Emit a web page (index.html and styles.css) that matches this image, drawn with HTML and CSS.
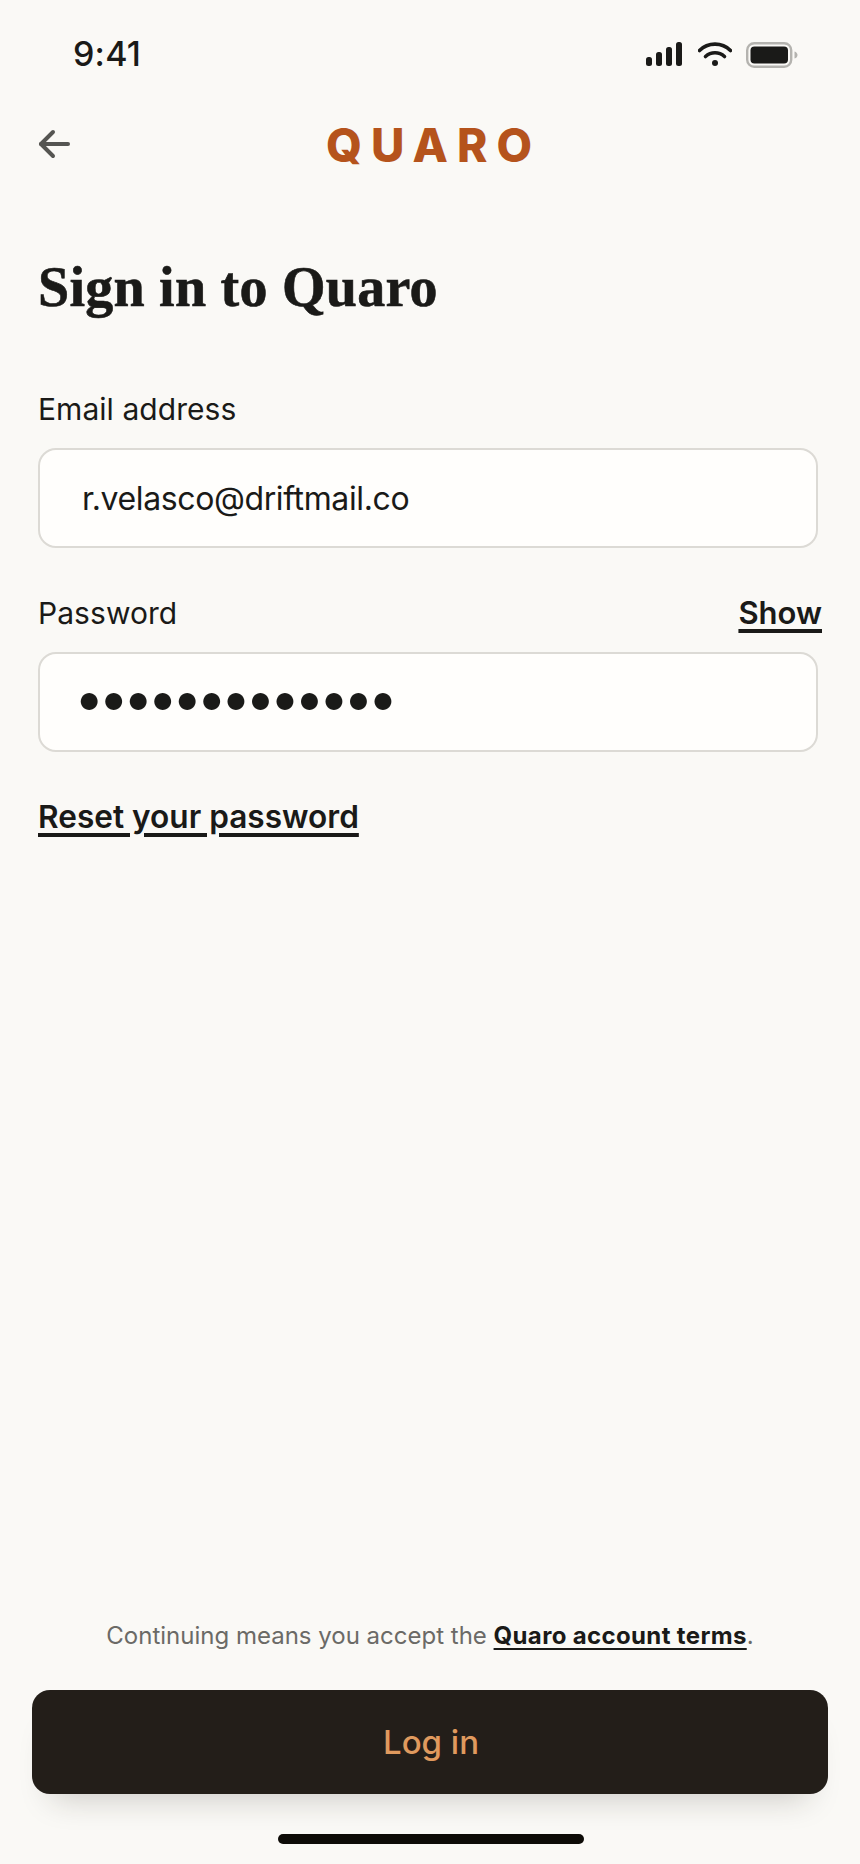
FILE: index.html
```html
<!DOCTYPE html>
<html lang="en">
<head>
<meta charset="utf-8">
<title>Sign in to Quaro</title>
<link rel="stylesheet" href="styles.css">
</head>
<body>
<div class="screen">
  <header class="status">
    <span class="time">9:41</span>
    <div class="status-icons">
      <svg class="sig" width="36" height="24" viewBox="0 0 36 24"><g fill="#1a1a18"><rect x="0" y="15" width="6" height="9" rx="2.5"/><rect x="10" y="10" width="6" height="14" rx="2.5"/><rect x="20" y="5" width="6" height="19" rx="2.5"/><rect x="30" y="0" width="6" height="24" rx="2.5"/></g></svg>
      <svg class="wifi" width="34" height="24" viewBox="0 0 34 24"><g fill="none" stroke="#1a1a18" stroke-width="3.6" stroke-linecap="round"><path d="M1.5 8.5C10 0 24 0 32.500 8.5"/><path d="M7.5 14.5C13 9.5 21 9.5 26.5 14.5"/></g><circle cx="17" cy="21" r="3" fill="#1a1a18"/></svg>
      <svg class="batt" width="52" height="26" viewBox="0 0 52 26"><rect x="1.2" y="1.2" width="44" height="23.6" rx="7" fill="none" stroke="#b4b3af" stroke-width="2.4"/><rect x="4.5" y="4.5" width="37.5" height="17" rx="4" fill="#1a1a18"/><path d="M48.500 9.500C50.500 10 51.500 11.500 51.500 13C51.500 14.500 50.500 16 48.500 16.500Z" fill="#b4b3af"/></svg>
    </div>
  </header>

  <nav class="nav">
    <svg class="back" width="34" height="30" viewBox="0 0 34 30"><g fill="none" stroke="#555552" stroke-width="4" stroke-linecap="round" stroke-linejoin="round"><path d="M31 15H4"/><path d="M16 3L4 15L16 27"/></g></svg>
    <span class="logo">QUARO</span>
  </nav>

  <main class="form">
    <h1 class="title">Sign in to Quaro</h1>

    <div class="field">
      <div class="label-row"><label class="label">Email address</label></div>
      <div class="input">r.velasco@driftmail.co</div>
    </div>

    <div class="field">
      <div class="label-row"><label class="label">Password</label><a class="link show">Show</a></div>
      <div class="input dots">•••••••••••••</div>
    </div>

    <a class="link reset">Reset your password</a>
  </main>

  <footer class="foot">
    <p class="terms">Continuing means you accept the <a class="terms-link">Quaro account terms</a>.</p>
    <button class="cta">Log in</button>
    <div class="home"></div>
  </footer>
</div>
</body>
</html>
```
FILE: styles.css
```css
* { box-sizing: border-box; }
html, body { margin: 0; padding: 0; }
body {
  background: #faf9f6;
  color: #1a1a18;
  font-family: Inter, "Liberation Sans", sans-serif;
}
.screen {
  width: 860px;
  height: 1864px;
  display: flex;
  flex-direction: column;
  overflow: hidden;
}
.status {
  height: 108px;
  padding: 32px 62px 0 73px;
  display: flex;
  justify-content: space-between;
  align-items: flex-start;
}
.time {
  font-size: 34px;
  font-weight: 500;
  line-height: 44px;
  letter-spacing: 0.2px;
}
.status-icons {
  display: flex;
  align-items: flex-start;
  gap: 16px;
  padding-top: 10px;
}
.wifi { margin-right: -2px; }
.nav {
  height: 74px;
  position: relative;
  display: flex;
  align-items: center;
  justify-content: center;
  padding: 0 38px;
}
.back { position: absolute; left: 37px; top: 21px; }
.logo {
  font-size: 46px;
  font-weight: 800;
  color: #b5531c;
  letter-spacing: 9px;
  margin-left: 7px;
  line-height: 74px;
}
.form {
  flex: 1;
  padding: 0 38px;
  display: flex;
  flex-direction: column;
  align-items: stretch;
}
.title {
  margin: 75px 0 0;
  font-family: "Liberation Serif", serif;
  font-size: 56px;
  font-weight: 700;
  line-height: 60px;
  letter-spacing: 0.25px;
  -webkit-text-stroke: 0.6px #1a1a18;
  color: #1a1a18;
}
.field { margin-top: 24px; }
.field:first-of-type { margin-top: 51px; }
.label-row {
  display: flex;
  justify-content: space-between;
  align-items: center;
  height: 44px;
  margin-top: 18px;
  margin-bottom: 18px;
}
.label {
  font-size: 30px;
  line-height: 44px;
  font-weight: 400;
  letter-spacing: 0.05px;
  margin-top: 2px;
}
.link {
  color: #1a1a18;
  font-weight: 600;
  font-size: 31px;
  text-decoration: underline;
  text-decoration-thickness: 4px;
  text-underline-offset: 5px;
}
.input {
  width: 780px;
  height: 100px;
  border: 2.5px solid #dcdad5;
  border-radius: 18px;
  background: #fffefc;
  padding: 0 42px;
  display: flex;
  align-items: center;
  font-size: 32px;
  letter-spacing: -0.38px;
}
.dots {
  font-size: 54px;
  line-height: 54px;
  letter-spacing: -5.9px;
  padding-left: 34px;
  padding-bottom: 8px;
}
.reset {
  margin-top: 43px;
  font-size: 31.6px;
  line-height: 44px;
  align-self: flex-start;
}
.foot {
  display: flex;
  flex-direction: column;
  align-items: center;
}
.terms {
  margin: 0 0 38px;
  font-size: 24px;
  line-height: 32px;
  color: #6b6a66;
}
.terms-link {
  color: #1a1a18;
  font-weight: 700;
  letter-spacing: 0.35px;
  text-decoration: underline;
  text-decoration-thickness: 2px;
  text-underline-offset: 4px;
}
.cta {
  width: 796px;
  height: 104px;
  border: 0;
  border-radius: 18px;
  background: #231e19;
  color: #e09a5e;
  font-family: inherit;
  font-size: 33px;
  font-weight: 500;
  padding-left: 8px;
  box-shadow: 0 24px 32px -20px rgba(35, 30, 25, 0.22);
}
.home {
  width: 306px;
  height: 10px;
  border-radius: 5px;
  background: #0d0b07;
  margin-top: 40px;
  margin-bottom: 20px;
  margin-left: 2px;
}
```
